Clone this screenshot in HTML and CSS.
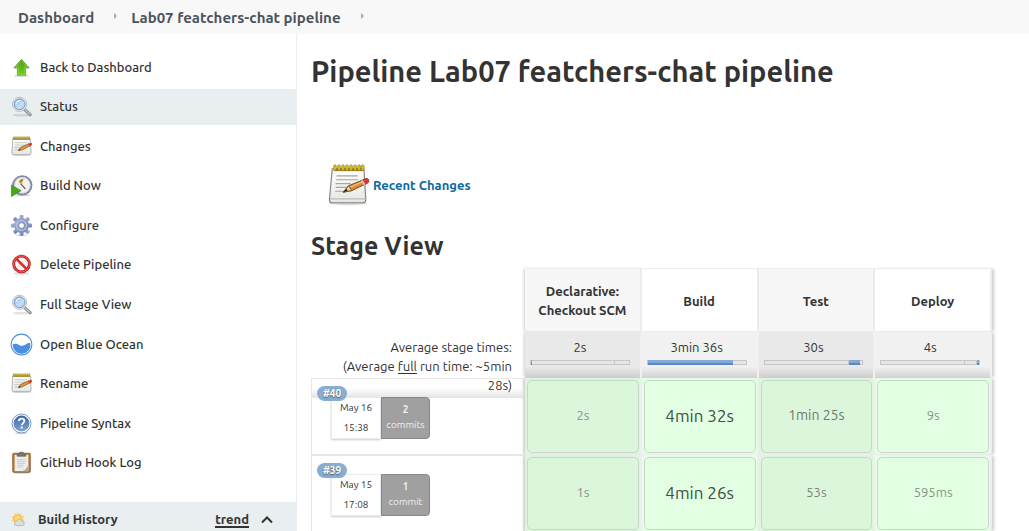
FILE: index.html
```html
<!DOCTYPE html>
<html lang="en">
<head>
<meta charset="utf-8">
<title>Lab07 featchers-chat pipeline</title>
<link rel="stylesheet" href="styles.css">
</head>
<body>
<svg class="defs" aria-hidden="true">
  <defs>
    <linearGradient id="green" x1="0" y1="0" x2="0" y2="1"><stop offset="0" stop-color="#4b9a1d"/><stop offset=".6" stop-color="#63b820"/><stop offset="1" stop-color="#74d216"/></linearGradient>
    <linearGradient id="glass" x1="0" y1="0" x2="1" y2="1"><stop offset="0" stop-color="#8db5e3"/><stop offset=".6" stop-color="#c7def5"/><stop offset="1" stop-color="#a4c6ec"/></linearGradient>
    <linearGradient id="paper" x1="0" y1="0" x2="0" y2="1"><stop offset="0" stop-color="#fff"/><stop offset="1" stop-color="#e6e6e2"/></linearGradient>
    <linearGradient id="steel" x1="0" y1="0" x2="1" y2="1"><stop offset="0" stop-color="#a8b5d8"/><stop offset="1" stop-color="#6f82b4"/></linearGradient>
    <linearGradient id="help" x1="0" y1="0" x2="0" y2="1"><stop offset="0" stop-color="#3967a6"/><stop offset="1" stop-color="#7fa4d4"/></linearGradient>
    <symbol id="up" viewBox="0 0 24 24">
      <ellipse cx="12" cy="20.500" rx="8" ry="1.500" fill="#000" opacity=".13"/>
      <path d="M12 3.500 20 12.500H16.300V20H7.700v-7.500H4z" fill="url(#green)" stroke="#56a51e" stroke-width=".8"/>
      <path d="M12 5 17.800 11.700H15.400V19H8.600v-7.300H6.200z" fill="none" stroke="#9adb5b" stroke-width=".6"/>
    </symbol>
    <symbol id="magnifier" viewBox="0 0 24 24">
      <ellipse cx="12" cy="21" rx="9" ry="1.500" fill="#000" opacity=".1"/>
      <path d="m15 15 6 5.500" stroke="#888" stroke-width="3.400" stroke-linecap="round"/>
      <path d="m15.500 15.300 5.300 4.800" stroke="#c6c6c6" stroke-width="1.500" stroke-linecap="round"/>
      <circle cx="10" cy="9.700" r="7.400" fill="#f6f6f4" stroke="#aaa" stroke-width=".8"/>
      <circle cx="10" cy="9.700" r="5.700" fill="url(#glass)" stroke="#5987c6" stroke-width=".9"/>
      <path d="M6.300 9.700a3.800 3.800 0 0 1 4.200-3.800" fill="none" stroke="#eef6ff" stroke-width="1.200"/>
    </symbol>
    <symbol id="notepad" viewBox="0 0 48 48">
      <ellipse cx="22" cy="43" rx="20" ry="2" fill="#000" opacity=".15"/>
      <path d="M5.500 7h33l2 32.500q0 3-3 3h-32q-3 0-3-3z" fill="url(#paper)" stroke="#858585" stroke-width="1.200"/>
      <path d="M3 38.500h37.200" stroke="#bbb" stroke-width="1.200"/>
      <path d="M10 14.500h22M9.500 18.500h23M9 22.500h16M9 26.500h16M8.500 30.500h11" stroke="#a5a5a3" stroke-width="1.200"/>
      <path d="M7 8h31.500" stroke="#8c7a24" stroke-width="3"/>
      <g fill="#e1c431" stroke="#95800f" stroke-width=".8"><rect x="7" y="3" width="2.600" height="6" rx="1.300"/><rect x="11.200" y="3" width="2.600" height="6" rx="1.300"/><rect x="15.400" y="3" width="2.600" height="6" rx="1.300"/><rect x="19.600" y="3" width="2.600" height="6" rx="1.300"/><rect x="23.800" y="3" width="2.600" height="6" rx="1.300"/><rect x="28" y="3" width="2.600" height="6" rx="1.300"/><rect x="32.200" y="3" width="2.600" height="6" rx="1.300"/><rect x="36" y="3" width="2.600" height="6" rx="1.300"/></g>
      <path d="m17 31.500 5.500-6.700L38 18.500l2.600 4.200-14.600 7.100z" fill="#dc8c35" stroke="#704313" stroke-width="1"/>
      <path d="m24 26.300 15-6.500" stroke="#f3bd75" stroke-width="1.400"/>
      <path d="m17 31.500 5.500-6.700 3.500 5z" fill="#e8cf9d" stroke="#704313" stroke-width=".8"/>
      <path d="m17 31.500 3-3.700 1.500 2.300z" fill="#222"/>
      <path d="m37 18.800 3-1.500q2.600-.9 3.600 1.200t-1 3.600l-2.600 1.300z" fill="#df3434" stroke="#a32020" stroke-width=".6"/>
      <path d="m35.500 19.500 3 4.800 1.700-.8-3-4.800z" fill="#ccc"/>
    </symbol>
    <symbol id="small-notepad" viewBox="0 0 24 24">
      <ellipse cx="12" cy="21" rx="10" ry="1" fill="#000" opacity=".15"/>
      <path d="M3 4h18l1 14.500q0 2-2 2H4q-2 0-2-2z" fill="url(#paper)" stroke="#a5a5a3" stroke-width=".9"/>
      <path d="M5 8h13M5 10.500h12M4.500 13h7M4.500 15.500h4" stroke="#bbb" stroke-width=".8"/>
      <path d="M3 3.500h18" stroke="#a8963c" stroke-width="3.400"/>
      <path d="M4 2.700h16" stroke="#d3c15a" stroke-width="1.600" stroke-dasharray="1.500 1"/>
      <path d="m8.500 16.300 3-3.600 8.300-3.700 1.300 2.200-8.200 4.200z" fill="#de963f" stroke="#80501c" stroke-width=".7"/>
      <path d="m8.500 16.300 1.700-2 1 1.500z" fill="#333"/>
      <path d="m19 9.300 2-1q1.700-.4 2 .8t-.8 1.800l-2 1z" fill="#db3c35"/>
    </symbol>
    <symbol id="clock" viewBox="0 0 24 24">
      <ellipse cx="13" cy="22" rx="8" ry="1.200" fill="#000" opacity=".16"/>
      <circle cx="12.800" cy="11.800" r="9.600" fill="#f1f1ed" stroke="#8585a6" stroke-width="2"/>
      <circle cx="12.800" cy="11.800" r="8.300" fill="none" stroke="#c7c7d6" stroke-width=".7"/>
      <path d="M12.800 11 9 6.300 14.500 4.600z" fill="#efc43c"/>
      <path d="m10 9 3-3.500M11 10l5 5.500" fill="none" stroke="#555" stroke-width="1.200"/>
      <path d="M1.500 11.500v12l10-6z" fill="#48a91c" stroke="#348714" stroke-width=".7"/>
    </symbol>
    <symbol id="gear" viewBox="0 0 24 24">
      <ellipse cx="12" cy="22" rx="7" ry="1" fill="#000" opacity=".12"/>
      <g fill="url(#steel)"><rect x="10" y="1" width="4" height="22" rx="1"/><rect x="10" y="1" width="4" height="22" rx="1" transform="rotate(45 12 12)"/><rect x="1" y="10" width="22" height="4" rx="1"/><rect x="10" y="1" width="4" height="22" rx="1" transform="rotate(135 12 12)"/><circle cx="12" cy="12" r="7.800"/></g>
      <circle cx="12" cy="12" r="5.200" fill="none" stroke="#bac5e3" stroke-width="1.200"/>
      <circle cx="12" cy="12" r="3" fill="#fff" stroke="#7383ad" stroke-width=".9"/>
    </symbol>
    <symbol id="stop" viewBox="0 0 24 24">
      <ellipse cx="12" cy="21.200" rx="8" ry="1.300" fill="#000" opacity=".16"/>
      <circle cx="12" cy="11.500" r="8.200" fill="#f7f5f5" stroke="#c52020" stroke-width="3"/>
      <path d="m6.400 5.900 11.200 11.200" stroke="#d82b2b" stroke-width="2.800"/>
      <circle cx="12" cy="11.500" r="8.300" fill="none" stroke="#ee6363" stroke-width="1"/>
    </symbol>
    <symbol id="ocean" viewBox="0 0 24 24">
      <circle cx="12" cy="12" r="10.800" fill="#fff" stroke="#4a90e2" stroke-width="1.100"/>
      <path d="M2.800 11.800c2.400-.8 3.800-.7 6.600.6 3 1.500 5.200 1 7.300-.6 1.600-1.300 3-1.800 4.500-1.300A9.300 9.300 0 1 1 2.800 11.800z" fill="#4a90e2"/>
    </symbol>
    <symbol id="question" viewBox="0 0 24 24">
      <ellipse cx="12" cy="22" rx="7" ry="1" fill="#000" opacity=".2"/>
      <circle cx="12" cy="12" r="9.900" fill="#fff" stroke="#7592c0" stroke-width="1"/>
      <circle cx="12" cy="12" r="8.300" fill="url(#help)"/>
      <path d="M9.200 9.500c.2-1.800 1.400-2.500 2.900-2.500 1.700 0 2.900 1 2.900 2.500 0 2-2.700 2.200-2.700 4.300" fill="none" stroke="#fff" stroke-width="1.900"/><circle cx="12.200" cy="16.300" r="1.200" fill="#fff"/>
    </symbol>
    <symbol id="clipboard" viewBox="0 0 24 24">
      <ellipse cx="12" cy="22.700" rx="9" ry="1" fill="#000" opacity=".2"/>
      <rect x="2.800" y="2.300" width="18.400" height="20" rx="1" fill="#b57829" stroke="#80501c" stroke-width=".7"/>
      <path d="M4.800 4h14.400v17H4.800z" fill="#eee"/><path d="m13.700 21 5.500-5.500V21z" fill="#aaa"/><path d="m13.700 21 .8-4.500 4.700-1z" fill="#fff" stroke="#bbb" stroke-width=".4"/>
      <path d="M7.500 9h9M7.500 11h9M7.500 13h8M7.500 15h7M7.500 17h5" stroke="#bcbcbc" stroke-width=".7"/>
      <path d="M7.500 5.500V3.300h2l.8-2h3.400l.8 2h2v2.200z" fill="#777" stroke="#555" stroke-width=".6"/>
    </symbol>
    <symbol id="weather" viewBox="0 0 16 16">
      <path d="m7 0 1.400 2.300L11 1l.4 3 3 .5-1.400 2.400 1.300 2.700-3.300 1-1 2.900-3-1.300-3 1.300-.8-3L.3 9.700l1.400-2.800L.2 4.300l3-.3.4-3 2.300 1.400z" fill="#f8d28c"/>
      <circle cx="7.200" cy="7.100" r="3.800" fill="#ffdc72" stroke="#eba94c" stroke-width=".7"/>
      <path d="M6 14.500a2.500 2.500 0 0 1 .2-5 3 3 0 0 1 5.500.2 2.500 2.500 0 0 1 .9 4.800z" fill="#ddddda" stroke="#a7a7a3" stroke-width=".7"/>
    </symbol>
  </defs>
</svg>
<header class="breadcrumbs">
  <a href="#">Dashboard</a><i class="crumb-arrow"></i>
  <a href="#">Lab07 featchers-chat pipeline</a><i class="crumb-arrow"></i>
</header>
<div class="page">
  <aside class="side">
    <nav class="tasks">
      <a class="task" href="#"><svg class="icon"><use href="#up"/></svg>Back to Dashboard</a>
      <a class="task active" href="#"><svg class="icon"><use href="#magnifier"/></svg>Status</a>
      <a class="task" href="#"><svg class="icon"><use href="#small-notepad"/></svg>Changes</a>
      <a class="task" href="#"><svg class="icon"><use href="#clock"/></svg>Build Now</a>
      <a class="task" href="#"><svg class="icon"><use href="#gear"/></svg>Configure</a>
      <a class="task" href="#"><svg class="icon"><use href="#stop"/></svg>Delete Pipeline</a>
      <a class="task" href="#"><svg class="icon"><use href="#magnifier"/></svg>Full Stage View</a>
      <a class="task" href="#"><svg class="icon"><use href="#ocean"/></svg>Open Blue Ocean</a>
      <a class="task" href="#"><svg class="icon"><use href="#small-notepad"/></svg>Rename</a>
      <a class="task" href="#"><svg class="icon"><use href="#question"/></svg>Pipeline Syntax</a>
      <a class="task" href="#"><svg class="icon"><use href="#clipboard"/></svg>GitHub Hook Log</a>
    </nav>
    <section class="history">
      <svg class="weather"><use href="#weather"/></svg>
      <h2>Build History</h2>
      <a class="trend" href="#">trend</a>
      <button class="collapse" type="button" aria-label="Collapse"><svg viewBox="0 0 12 8"><path d="m1 6.500 5-5 5 5" fill="none" stroke="#333" stroke-width="2"/></svg></button>
    </section>
  </aside>
  <main class="main">
    <h1>Pipeline Lab07 featchers-chat pipeline</h1>
    <a class="recent" href="#"><svg class="recent-icon"><use href="#notepad"/></svg>Recent Changes</a>
    <h2 class="view-title">Stage View</h2>
    <table class="stages">
      <colgroup><col class="runs"><col><col><col><col></colgroup>
      <thead>
        <tr class="names"><td></td><th scope="col">Declarative: Checkout SCM</th><th scope="col">Build</th><th scope="col">Test</th><th scope="col">Deploy</th></tr>
        <tr class="totals">
          <td><div class="average">Average stage times:<br>(Average <span class="full">full</span> run time: ~5min 28s)</div></td>
          <td>2s<div class="bar"><i style="width:1%"></i><b style="width:85%"></b></div></td>
          <td>3min 36s<div class="bar"><i style="width:87%"></i></div></td>
          <td>30s<div class="bar"><b style="width:86%"></b><i style="width:12%"></i></div></td>
          <td>4s<div class="bar"><b style="width:86%"></b><b style="width:12%"></b><i style="width:2%"></i></div></td>
        </tr>
      </thead>
      <tbody>
        <tr class="run">
          <td><span class="badge">#40</span><div class="cards"><div class="date">May 16<br>15:38</div><div class="commits"><strong>2</strong><br>commits</div></div></td>
          <td><div class="result faint">2s</div></td><td><div class="result long">4min 32s</div></td><td><div class="result medium">1min 25s</div></td><td><div class="result faint">9s</div></td>
        </tr>
        <tr class="run">
          <td><span class="badge">#39</span><div class="cards"><div class="date">May 15<br>17:08</div><div class="commits"><strong>1</strong><br>commit</div></div></td>
          <td><div class="result faint">1s</div></td><td><div class="result long">4min 26s</div></td><td><div class="result soft">53s</div></td><td><div class="result faint">595ms</div></td>
        </tr>
      </tbody>
    </table>
  </main>
</div>
</body>
</html>
```
FILE: styles.css
```css
* { box-sizing: border-box; }
body { margin: 0; background: #fff; color: #333; font: 13px/19px Ubuntu, "Noto Sans", sans-serif; }
a { color: inherit; text-decoration: none; }
.defs { position: absolute; width: 0; height: 0; }
.breadcrumbs { display: flex; align-items: center; height: 34px; padding-left: 18px; background: #f8f8f8; color: #4d545d; font-size: 15px; font-weight: 700; }
.crumb-arrow { margin: 0 14px 2px 20px; border: 3px solid transparent; border-left-color: #aaa; border-right-width: 0; }
.page { display: grid; grid-template-columns: 297px 1fr; }
.side { border-right: 1px solid #e9eef1; padding-top: 15px; }
.tasks { display: flex; flex-direction: column; justify-content: space-between; min-height: 432px; margin-bottom: 21px; }
.task { display: flex; align-items: center; gap: 7px; height: 36px; padding-left: 10px; font-weight: 500; }
.active, .history { background: #e9eef1; }
.icon { width: 23px; height: 23px; }
.history { display: flex; align-items: center; padding: 8px 23px 2px 11px; }
.history h2 { margin: 0 auto 0 12px; font-size: 13px; line-height: 19px; }
.weather { width: 15px; height: 15px; }
.trend { border-bottom: 2px solid #333; line-height: 14px; font-weight: 700; }
.collapse { display: flex; margin-left: 12px; padding: 0; border: 0; background: none; }
.collapse svg { width: 12px; height: 8px; }
.main { padding: 19px 37px 0 14px; }
h1 { margin: 0; font-size: 29px; line-height: 36px; }
.recent { display: flex; width: max-content; align-items: center; margin: 73px 0 0 16px; color: #0b6aa2; font-weight: 700; }
.recent-icon { width: 46px; height: 46px; }
.view-title { margin: 22px 0 6px; font-size: 25px; line-height: 32px; }
.stages { width: 100%; table-layout: fixed; border-spacing: 0; border-collapse: separate; }
.runs { width: 214px; }
.stages th, .stages td { padding: 0; text-align: center; }
.names th { height: 64px; padding: 2px 8px 0; border: solid #eaeef0; border-width: 1px 2px 1px 0; font-weight: 700; }
.names th:nth-child(even) { background: #f7f7f7; }
.stages th:last-child, .stages td:last-child { box-shadow: 3px 0 3px -1px #ccc; }
.stages tr > :nth-child(2) { box-shadow: -2px 0 3px -1px #ccc; }
.totals td { vertical-align: top; }
.totals td:not(:first-child) { height: 46px; padding: 6px 10px 0 5px; border-right: 2px solid #f0f0f0; background: linear-gradient(#f1f1f1 75%, #d2d2d2); }
.totals td:nth-child(even):not(:first-child) { background: linear-gradient(#e9e9e9 75%, #cdcdcd); }
.average { height: 66px; margin-bottom: -20px; padding: 6px 13px 0 20px; text-align: right; background: linear-gradient(transparent 85%, #e4e4e4); }
.full { border-bottom: 1px solid #333; }
.bar { display: flex; height: 5px; margin-top: 3px; background: #e6e6e6; border: 1px solid #c6c6c6; }
.bar i { height: 5px; margin: -1px 0; background: linear-gradient(#85a9d4 60%, #5787cf 60%); }
.bar b { border-right: 1px solid #c6c6c6; }
.run td { height: 77px; }
.run td:first-child { padding: 7px 0 0 5px; vertical-align: top; text-align: left; border: solid #e7e7e7; border-width: 1px 2px 1px 1px; }
.run td:not(:first-child) { padding: 2px 1px 1px 2px; background: #e3ffe3; border-right: 2px solid #eee; border-bottom: 1px solid #eee; }
.run td:nth-child(even):not(:first-child) { background: #dcf6dc; }
.badge { position: relative; z-index: 1; display: block; width: 30px; height: 15px; border-radius: 8px; background: #88add3; color: #fff; font-size: 10px; line-height: 15px; font-weight: 700; text-align: center; text-shadow: 0 1px 1px #555; }
.cards { position: relative; display: flex; width: 99px; height: 42px; margin: -4px 0 0 14px; font-size: 10px; line-height: 20px; text-align: center; }
.date { width: 50px; background: #fff; border: 1px solid #e7edf0; box-shadow: 0 1px 2px #ccc; }
.commits { width: 49px; padding-top: 4px; border: 1px solid #888; border-radius: 0 4px 4px 0; background: #a0a0a0; color: #eee; line-height: 15px; }
.result { display: grid; place-items: center; height: 73px; padding-bottom: 2px; border: 1px solid #c8d6cc; border-radius: 5px; }
.faint { color: #849484; }
.soft { color: #748474; }
.medium { color: #6c7c6c; font-size: 14px; }
.long { color: #445044; font-size: 17px; }
```
